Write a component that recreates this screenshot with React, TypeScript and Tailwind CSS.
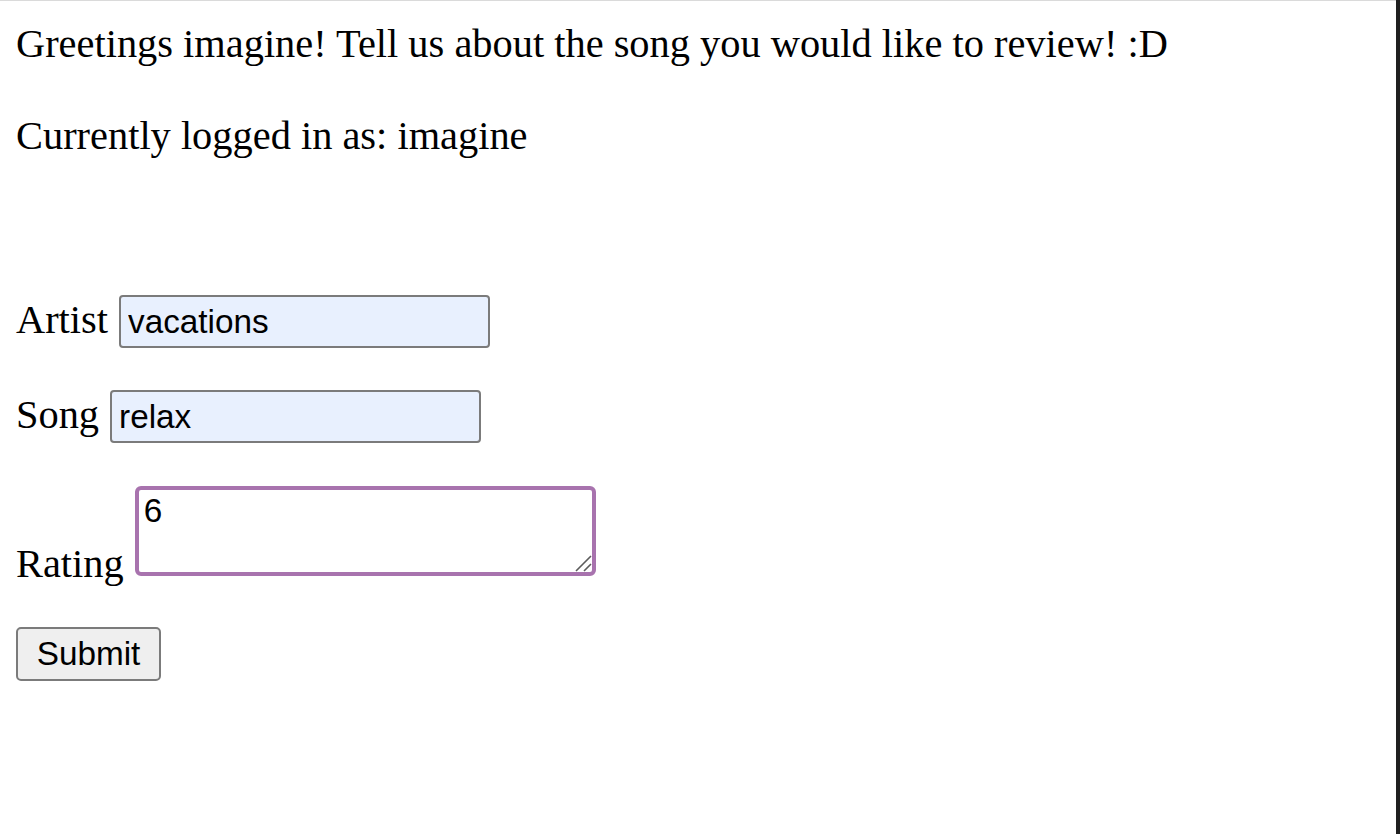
import React from 'react';

const serif = 'font-["Liberation_Serif","Times_New_Roman",serif]';
const sans = 'font-["Liberation_Sans",Arial,sans-serif]';

// Label + text field row, label and field share a baseline
function FieldRow({ label, value, top }: { label: string; value: string; top: string }) {
  return (
    <div className={`flex items-baseline gap-[11px] ${top}`}>
      <span className="leading-[46px]">{label}</span>
      <input
        readOnly
        value={value}
        className={`${sans} h-[53px] w-[371px] rounded-[4px] border-[2.5px] border-[#7b7b7b] bg-[#e8f0fe] px-[7px] text-[33.3px] leading-[38px] text-black outline-none`}
      />
    </div>
  );
}

export default function App() {
  return (
    <div className="flex h-[834px] w-full bg-white">
      <main className={`${serif} flex-1 border-t border-[#dadada] pl-4 text-[40.4px] text-black`}>
        <p className="mt-[20px] leading-[46px]">
          Greetings imagine! Tell us about the song you would like to review! :D
        </p>
        <p className="mt-[46px] leading-[46px]">Currently logged in as: imagine</p>

        <form onSubmit={(e) => e.preventDefault()}>
          <FieldRow label="Artist" value="vacations" top="mt-[136px]" />
          <FieldRow label="Song" value="relax" top="mt-[42px]" />

          {/* Rating sits on the textarea's bottom edge */}
          <div className="mt-[43px] flex items-start gap-[11px]">
            <span className="mt-[55px] leading-[46px]">Rating</span>
            <div className="relative">
              <textarea
                readOnly
                value="6"
                className={`${sans} block h-[90px] w-[461px] resize-none rounded-[6px] border-4 border-[#a873ae] bg-white px-[5px] pt-[2px] text-[33.3px] leading-[38px] text-black outline-none`}
              />
              <svg
                className="pointer-events-none absolute bottom-[4px] right-[4px]"
                width="18"
                height="18"
                viewBox="0 0 18 18"
              >
                <path d="M2 17 L17 2 M10 17 L17 10" stroke="#5c5c5c" strokeWidth="1.6" fill="none" />
              </svg>
            </div>
          </div>

          <button
            type="submit"
            className={`${sans} mt-[40px] block h-[54px] w-[145px] rounded-[5px] border-[2.5px] border-[#7b7b7b] bg-[#efefef] text-[33.3px] leading-[38px] text-black`}
          >
            Submit
          </button>
        </form>
      </main>
      <div className="w-[4px] bg-[#1f1f1f]" />
    </div>
  );
}
